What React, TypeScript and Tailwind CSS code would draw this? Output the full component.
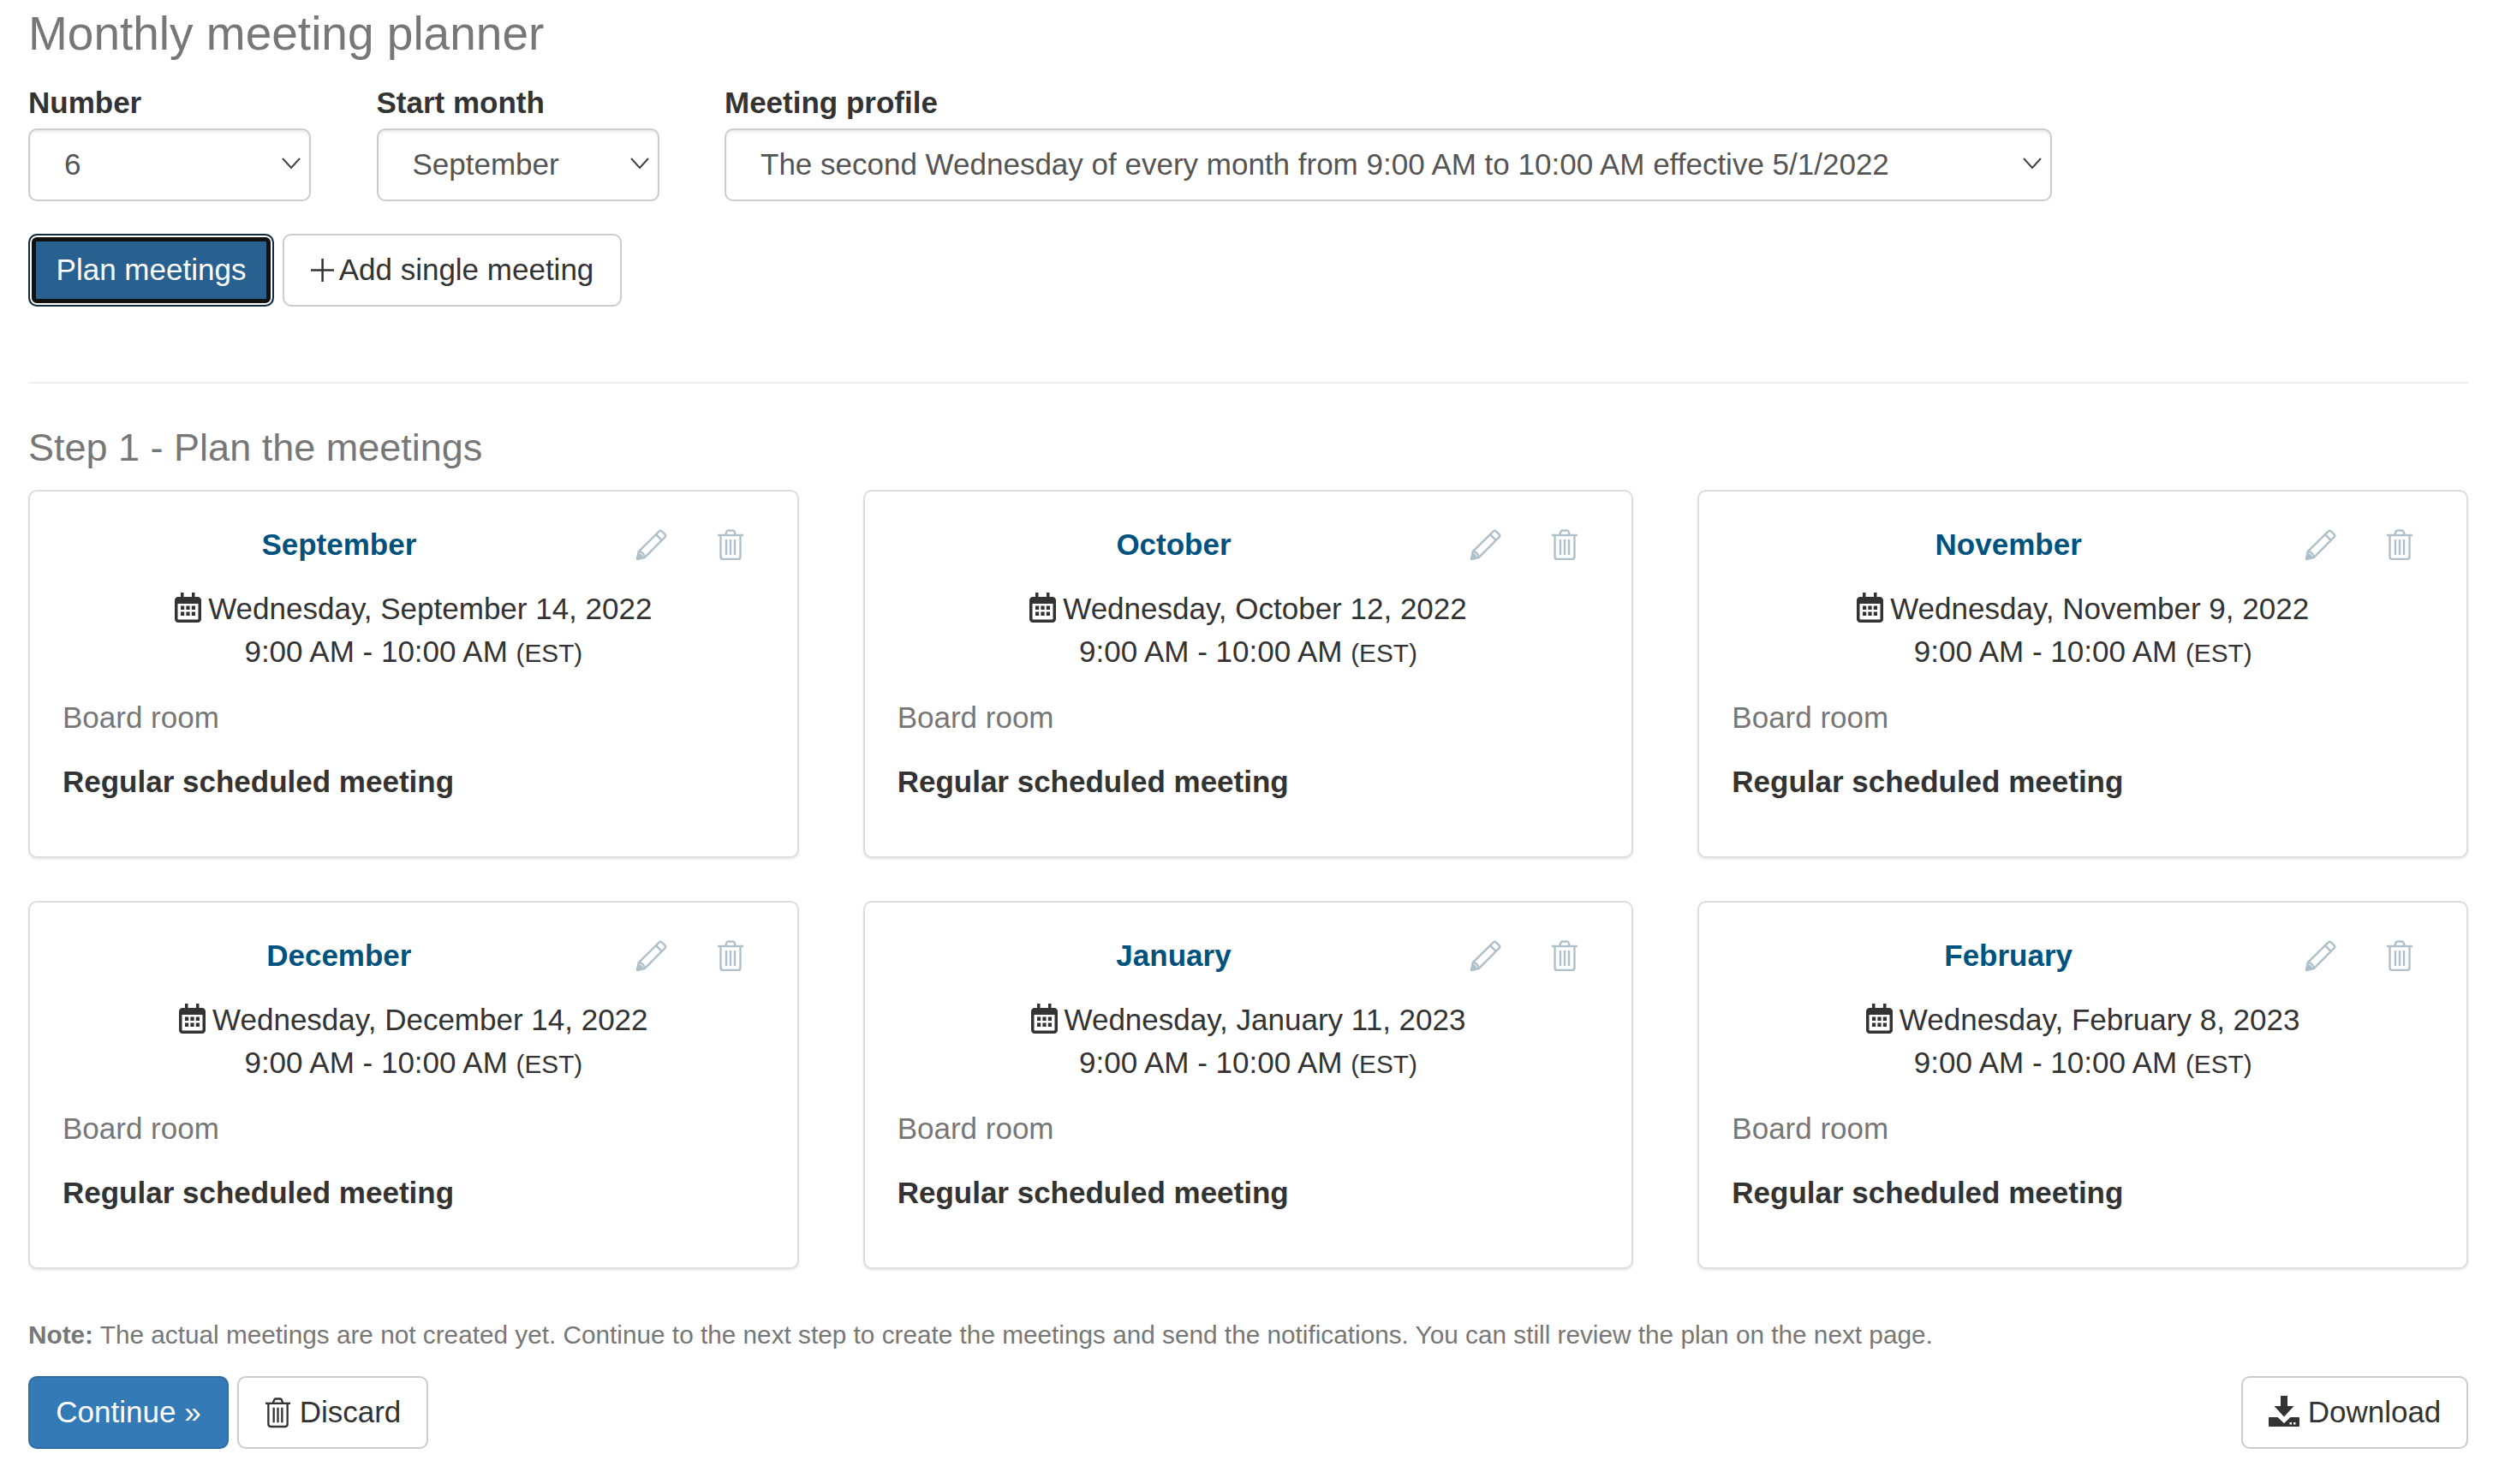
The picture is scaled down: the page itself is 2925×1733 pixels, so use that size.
const meetings = [
  { month: 'September', date: 'Wednesday, September 14, 2022' },
  { month: 'October', date: 'Wednesday, October 12, 2022' },
  { month: 'November', date: 'Wednesday, November 9, 2022' },
  { month: 'December', date: 'Wednesday, December 14, 2022' },
  { month: 'January', date: 'Wednesday, January 11, 2023' },
  { month: 'February', date: 'Wednesday, February 8, 2023' },
];

function TrashIcon({ className }: { className: string }) {
  return (
    <svg className={className} viewBox="0 0 32 36" fill="none" stroke="currentColor" strokeWidth={2.4}>
      <path d="M1 7h30" />
      <path d="M10 7l1.5-4.2c.3-.8 1-1.3 1.8-1.3h5.4c.8 0 1.5.5 1.8 1.3L22 7" />
      <path d="M4.5 7v25c0 1.7 1.2 3 2.8 3h17.4c1.6 0 2.8-1.3 2.8-3V7" />
      <path d="M11 12v18M16 12v18M21 12v18" />
    </svg>
  );
}

function PencilIcon({ className }: { className: string }) {
  return (
    <svg className={className} viewBox="0 0 36 36" fill="none" stroke="currentColor" strokeWidth={2.4} strokeLinejoin="round">
      <path d="M2 34l1.6-8.6L26.8 2.6c1-1 2.4-1 3.4 0l3.2 3.2c1 1 1 2.4 0 3.4L10.4 32.2 2 34z" />
      <path d="M23.4 6l6.6 6.8" />
      <path d="M3.6 25.4c3.6.2 6.6 3 6.8 6.8" />
      <path d="M2.4 33.6l1-5.2c2 .3 3.8 2 4.2 4.2l-5.2 1z" fill="currentColor" />
    </svg>
  );
}

function CalendarIcon() {
  return (
    <svg className="mr-[8px] inline-block h-[35px] w-[31px] align-[-4px] text-[#333]" viewBox="0 0 31 35" fill="currentColor">
      <path d="M7 0h3.5v5H20V0h3.5v5H27c2.2 0 4 1.8 4 4v22c0 2.2-1.800 4-4 4H4c-2.200 0-4-1.800-4-4V9c0-2.200 1.800-4 4-4h3V0zM3.500 13v17.500c0 .6.400 1 1 1h22c.6 0 1-.4 1-1V13H3.500z" />
      <path d="M7 15.500h4.200v4.400H7zM13.400 15.500h4.200v4.400h-4.200zM19.800 15.500H24v4.400h-4.200zM7 22.500h4.200v4.400H7zM13.400 22.500h4.200v4.400h-4.200zM19.800 22.500H24v4.400h-4.200z" />
    </svg>
  );
}

function DownloadIcon() {
  return (
    <svg className="mr-[10px] inline-block h-[36px] w-[36px] align-[-5px] text-[#333]" viewBox="0 0 36 36" fill="currentColor">
      <path d="M14 0h8v12h7.500L18 24.500 6.500 12H14V0z" />
      <path d="M1 25h9.500l7.500 7 7.500-7H35c.6 0 1 .4 1 1v9c0 .6-.4 1-1 1H1c-.6 0-1-.4-1-1v-9c0-.6.400-1 1-1z" />
      <path d="M24.500 31h2.500v2.500h-2.500zM29 31h2.500v2.500H29z" fill="#fff" />
    </svg>
  );
}

function SelectField({ label, options, widthClass }: { label: string; options: string[]; widthClass: string }) {
  return (
    <div className={widthClass}>
      <label className="mb-[5px] block h-[50px] text-[35px] leading-[50px] font-bold text-[#333]">{label}</label>
      <div className="relative">
        <select className="h-[85px] w-full appearance-none rounded-[10px] border-[2.5px] border-[#ccc] bg-white pr-[40px] pl-[40px] text-[35px] text-[#555] shadow-[inset_0_2.5px_2.5px_rgba(0,0,0,0.075)] outline-none">
          {options.map(option => (
            <option key={option}>{option}</option>
          ))}
        </select>
        <svg
          className="pointer-events-none absolute top-[34px] right-[12px] h-[14px] w-[22px] text-[#444]"
          viewBox="0 0 22 14"
          fill="none"
          stroke="currentColor"
          strokeWidth={2}
        >
          <path d="M1 1l10 11L21 1" />
        </svg>
      </div>
    </div>
  );
}

function MeetingCard({ month, date }: { month: string; date: string }) {
  return (
    <div className="h-[430px] rounded-[10px] border-[2.5px] border-[#ddd] bg-white px-[38px] pt-[37px] shadow-[0_2px_3px_rgba(0,0,0,0.08)]">
      <div className="flex h-[50px] items-center">
        <div className="flex-1 text-center text-[35px] font-bold text-[#00527f]">{month}</div>
        <div className="flex w-[174px] items-center">
          <button type="button" className="ml-[23px] text-[#b0c0cb]">
            <PencilIcon className="h-[37px] w-[37px]" />
          </button>
          <button type="button" className="ml-[58px] text-[#b0c0cb]">
            <TrashIcon className="h-[36px] w-[32px]" />
          </button>
        </div>
      </div>
      <div className="mt-[25px] text-center text-[35px] leading-[50px] text-[#333]">
        <div>
          <CalendarIcon />
          {date}
        </div>
        <div>
          9:00 AM - 10:00 AM <small className="text-[29.75px]">(EST)</small>
        </div>
      </div>
      <div className="mt-[25px] text-[35px] leading-[50px] text-[#777]">Board room</div>
      <div className="mt-[25px] text-[35px] leading-[50px] font-bold text-[#333]">Regular scheduled meeting</div>
    </div>
  );
}

export default function App() {
  return (
    <div className="h-[1733px] bg-white pt-[6px] pr-[43px] pl-[33px] font-['Liberation_Sans',Arial,sans-serif] text-[35px] text-[#333]">
      <h3 className="h-[66px] text-[55px] leading-[66px] font-normal text-[#777]">Monthly meeting planner</h3>

      {/* Formulaire */}
      <div className="mt-[23px] flex gap-[76.5px]">
        <SelectField label="Number" options={['6', '12']} widthClass="w-[330px]" />
        <SelectField label="Start month" options={['September', 'October']} widthClass="w-[330px]" />
        <SelectField
          label="Meeting profile"
          options={['The second Wednesday of every month from 9:00 AM to 10:00 AM effective 5/1/2022']}
          widthClass="w-[1550px]"
        />
      </div>

      <div className="mt-[38px] flex gap-[10px]">
        <button
          type="button"
          className="h-[85px] w-[287px] rounded-[10px] border-[2.5px] border-[#122b40] bg-[#286090] text-[35px] text-white shadow-[inset_0_0_0_2px_#fff,inset_0_0_0_7px_#111]"
        >
          Plan meetings
        </button>
        <button
          type="button"
          className="flex h-[85px] w-[396px] items-center justify-center rounded-[10px] border-[2.5px] border-[#ccc] bg-white text-[35px] text-[#333]"
        >
          <svg className="mr-[6px] h-[27px] w-[27px]" viewBox="0 0 28 28" fill="currentColor">
            <path d="M12.800 0h2.600v12.800H28v2.600H15.400V28h-2.600V15.400H0v-2.600h12.800z" />
          </svg>
          Add single meeting
        </button>
      </div>

      <hr className="mt-[88px] border-t-[2.500px] border-[#eee]" />

      <h4 className="mt-[50px] h-[50px] text-[45px] leading-[50px] font-normal text-[#777]">Step 1 - Plan the meetings</h4>

      {/* Cartes */}
      <div className="mt-[24px] grid grid-cols-3 gap-x-[75px] gap-y-[50px]">
        {meetings.map(meeting => (
          <MeetingCard key={meeting.month} month={meeting.month} date={meeting.date} />
        ))}
      </div>

      <p className="mt-[54px] h-[46px] text-[29.750px] leading-[46px] text-[#777]">
        <b>Note:</b> The actual meetings are not created yet. Continue to the next step to create the meetings and send
        the notifications. You can still review the plan on the next page.
      </p>

      <div className="mt-[25px] flex items-center">
        <button
          type="button"
          className="h-[85px] w-[234px] rounded-[10px] border-[2.500px] border-[#2e6da4] bg-[#337ab7] text-[35px] text-white"
        >
          Continue »
        </button>
        <button
          type="button"
          className="ml-[10px] flex h-[85px] w-[223px] items-center justify-center rounded-[10px] border-[2.500px] border-[#ccc] bg-white text-[35px] text-[#333]"
        >
          <TrashIcon className="mr-[10px] h-[37px] w-[31px]" />
          Discard
        </button>
        <button
          type="button"
          className="ml-auto h-[85px] w-[265px] rounded-[10px] border-[2.500px] border-[#ccc] bg-white text-[35px] text-[#333]"
        >
          <DownloadIcon />
          Download
        </button>
      </div>
    </div>
  );
}
